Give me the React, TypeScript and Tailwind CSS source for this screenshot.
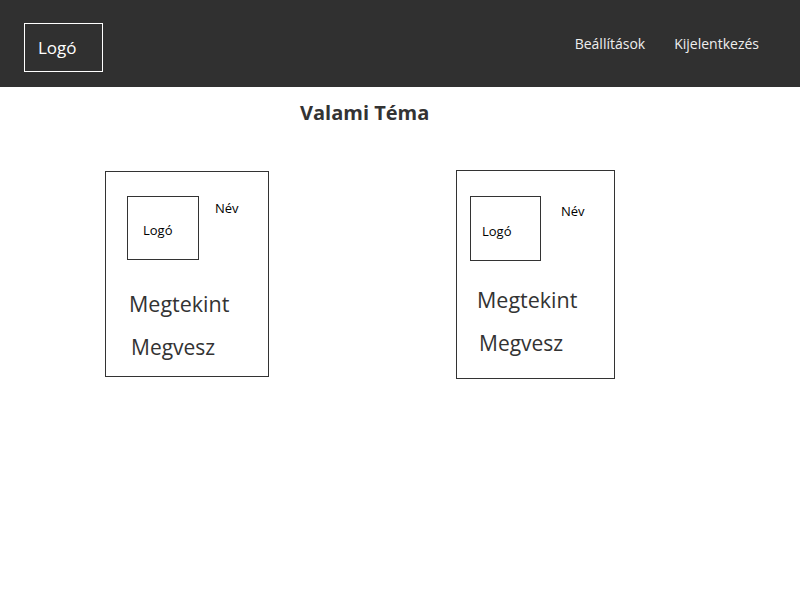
export default function App() {
  return (
    <div className="min-h-screen w-[800px] h-[600px] bg-white text-[#333] font-['Open_Sans',sans-serif]">
      <header className="flex h-[87px] items-start justify-between bg-[#303030] pl-[24px] pr-[41px] pt-[23px]">
        <div className="flex h-[49px] w-[79px] items-center border border-white pl-[13px] text-[17px] text-white">
          Logó
        </div>
        <nav className="mt-[10px] flex gap-[29px] text-[14px] text-[#eee]">
          <a href="#">Beállítások</a>
          <a href="#">Kijelentkezés</a>
        </nav>
      </header>

      <main className="pt-[12px]">
        <h1 className="pl-[300px] text-[20px] font-bold leading-[28px]">Valami Téma</h1>

        <div className="mt-[43px] flex items-start pl-[105px]">
          <div className="mt-[1px] h-[206px] w-[164px] border border-[#333] pl-[21px] pt-[24px]">
            <div className="flex items-start">
              <div className="flex h-[64px] w-[72px] items-center border border-[#333] pl-[15px] pt-[6px] text-[13px] text-black">
                Logó
              </div>
              <span className="ml-[16px] mt-[3px] text-[13px] text-black">Név</span>
            </div>
            <p className="ml-[2px] mt-[30px] text-[21.5px] leading-[28px]">Megtekint</p>
            <p className="ml-[4px] mt-[15px] text-[21px] leading-[28px]">Megvesz</p>
          </div>

          <div className="ml-[187px] h-[209px] w-[159px] border border-[#333] pl-[13px] pt-[25px]">
            <div className="flex items-start">
              <div className="flex h-[65px] w-[71px] items-center border border-[#333] pl-[11px] pt-[6px] text-[13px] text-black">
                Logó
              </div>
              <span className="ml-[20px] mt-[6px] text-[13px] text-black">Név</span>
            </div>
            <p className="ml-[7px] mt-[25px] text-[21.5px] leading-[28px]">Megtekint</p>
            <p className="ml-[9px] mt-[15px] text-[21px] leading-[28px]">Megvesz</p>
          </div>
        </div>
      </main>
    </div>
  );
}
